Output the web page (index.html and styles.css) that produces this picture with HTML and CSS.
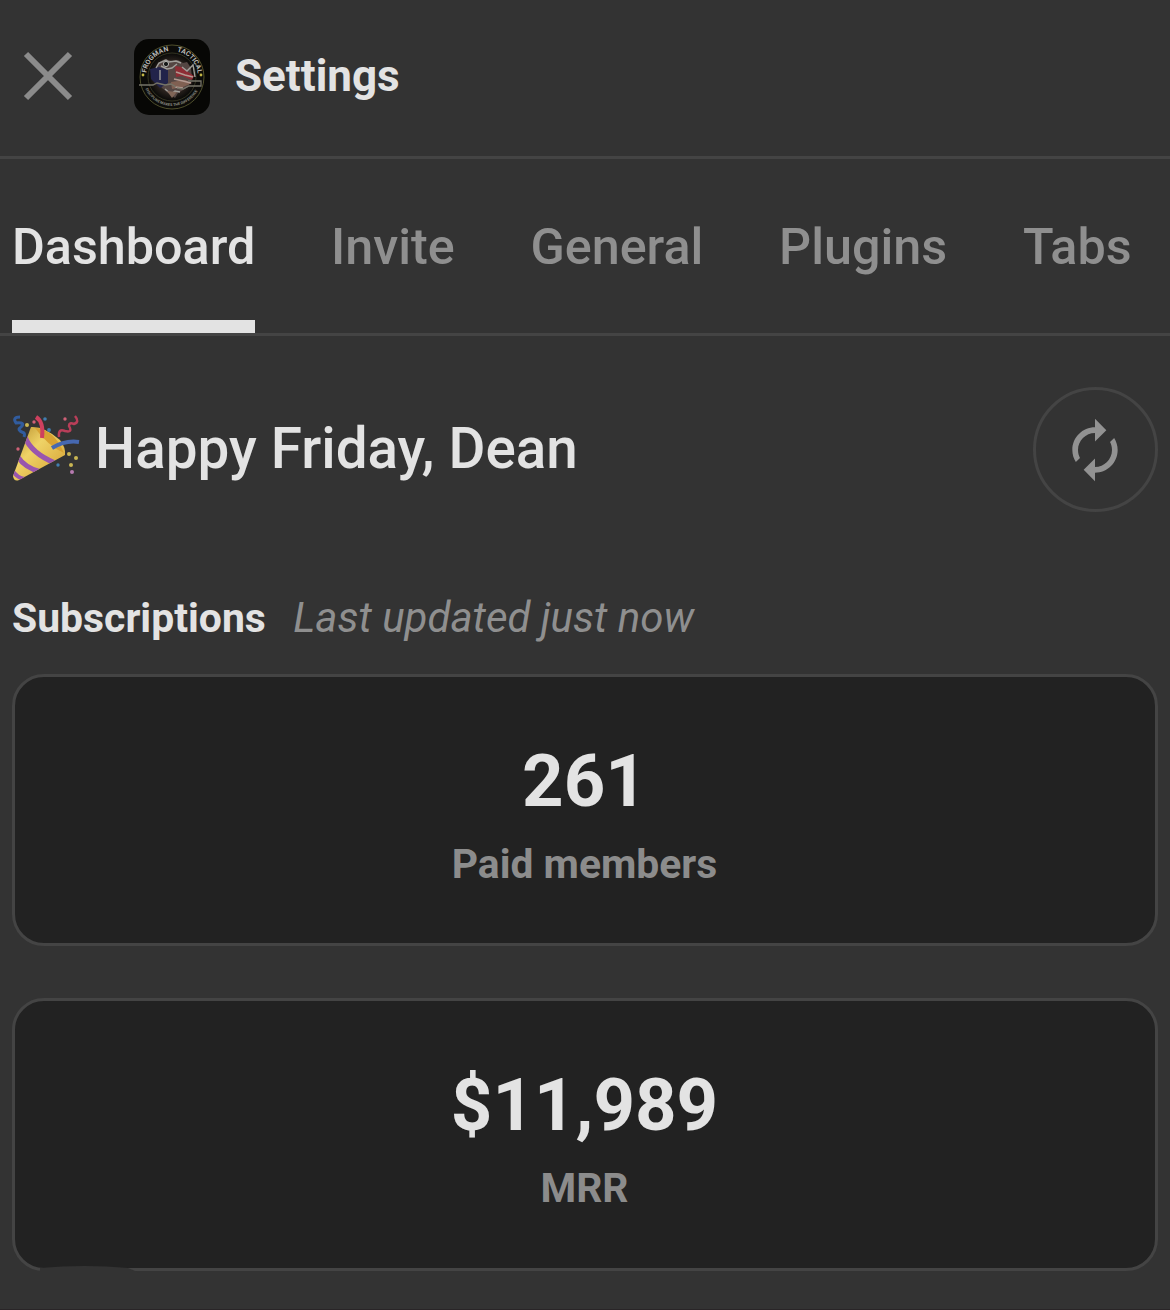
FILE: index.html
```html
<!DOCTYPE html>
<html lang="en">
<head>
  <meta charset="UTF-8">
  <meta name="viewport" content="width=device-width, initial-scale=1.0">
  <title>Settings</title>
  <link rel="stylesheet" href="styles.css">
</head>
<body>
  <header class="top-bar">
    <button class="close-btn" aria-label="Close">
      <svg width="50" height="50" viewBox="0 0 50 50"><path d="M3 3L47 47M47 3L3 47" stroke="#8b8b8b" stroke-width="6" fill="none"/></svg>
    </button>
    <svg class="logo" width="76" height="76" viewBox="0 0 76 76">
      <defs>
        <path id="ring-left" d="M12 38A26 26 0 0 1 38 12"/>
        <path id="ring-right" d="M38 12A26 26 0 0 1 64 38"/>
        <path id="ring-bottom" d="M9 38A29 29 0 0 0 67 38"/>
        <radialGradient id="glow"><stop offset="0" stop-color="#6d5a50"/><stop offset=".6" stop-color="#302722"/><stop offset="1" stop-color="#080807"/></radialGradient>
      </defs>
      <rect width="76" height="76" rx="15" fill="#070705"/>
      <circle cx="38" cy="38" r="32" fill="#0b0b09" stroke="#4f4f2c" stroke-width="1"/>
      <circle cx="38" cy="38" r="24" fill="url(#glow)" stroke="#3d3d28" stroke-width=".8"/>
      <text class="logo-text"><textPath href="#ring-left" startOffset="4">FROGMAN</textPath></text>
      <text class="logo-text"><textPath href="#ring-right" startOffset="5">TACTICAL</textPath></text>
      <text class="logo-motto"><textPath href="#ring-bottom" startOffset="12">DISCIPLINE MAKES THE DIFFERENCE</textPath></text>
      <!-- frog with flag and rifle -->
      <path d="M21 31l3-7 7-4 7 2 6-1 5 3 4-1 4 6 1 10-4 9-10 6-3 5-5-4-8-6-8-10z" fill="#544643"/>
      <path d="M16 30l9-2 9 3v13l-8 5-9-9z" fill="#22234a"/>
      <path d="M41 27l7 1 5 4 7 5-2 4-10-4-6 1z" fill="#8d2d35"/>
      <path d="M37 43l14-2 7 3-9 4-11 2z" fill="#806052"/>
      <path d="M42 33l9 3 8 2M40 40l9 2 8 2M41 48l8 1" stroke="#b39a92" stroke-width="1.6" fill="none"/>
      <path d="M22 29l3-5 7-3 3 2 7-1 5 2M27 27l6 3 5-1 5-4M26 31v10M48 28l5 4 6-6 2 12M31 50l6 5 4-3 5 1" stroke="#a09f9b" stroke-width="1.4" fill="none"/>
      <circle cx="32" cy="25" r="2.6" fill="#151717" stroke="#b5b5b0"/>
      <path d="M5 46h14l4-2 8 2 6-1 5 3M54 42h13v5h-12l-6 3-6-1" stroke="#767468" stroke-width="1.3" fill="none"/>
      <path d="M33 52l5 7 5-6" fill="#806557"/>
      <circle cx="9" cy="36" r="1.4" fill="#c1b543"/><circle cx="67" cy="36" r="1.4" fill="#c1b543"/>
    </svg>
    <h1 class="title">Settings</h1>
  </header>

  <nav class="tabs">
    <a class="tab active">Dashboard</a>
    <a class="tab">Invite</a>
    <a class="tab">General</a>
    <a class="tab">Plugins</a>
    <a class="tab">Tabs</a>
  </nav>

  <main class="content">
    <section class="greeting">
      <svg class="party" width="68" height="68" viewBox="0 0 68 68">
        <defs>
          <linearGradient id="cone" x1="0" y1="0" x2="1" y2="1"><stop offset="0" stop-color="#b58b29"/><stop offset=".4" stop-color="#efd367"/><stop offset="1" stop-color="#d29c2e"/></linearGradient>
          <clipPath id="cone-clip"><path d="M19 12Q32 11 48 25Q54 33 53 40L7 65Q2 67 1 61Z"/></clipPath>
        </defs>
        <path d="M19 12Q32 11 48 25Q54 33 53 40L7 65Q2 67 1 61Z" fill="url(#cone)"/>
        <g clip-path="url(#cone-clip)" fill="none" stroke="#9956ae" stroke-width="5">
          <path d="M13 22Q19 38 43 48"/>
          <path d="M6 42Q13 53 29 57"/>
          <path d="M0 55Q5 63 13 64" stroke-width="4"/>
        </g>
        <path d="M23 13Q42 14 52 38Q36 31 23 13" fill="#d8a232"/>
        <path d="M24 2Q32 7 30 23" fill="none" stroke="#ce405e" stroke-width="4"/>
        <path d="M40 33Q53 25 67 27" fill="none" stroke="#4668b1" stroke-width="4"/>
        <path d="M8 2Q0 2 4 8Q14 7 9 12Q4 15 12 18Q13 19 12 22" fill="none" stroke="#315c9e" stroke-width="3"/>
        <path d="M63 1Q68 7 62 9Q57 7 57 11Q61 18 53 16Q46 13 47 22" fill="none" stroke="#b93e59" stroke-width="2.5"/>
        <g fill="#cf6176"><circle cx="22" cy="7" r="1.7"/><circle cx="53" cy="4" r="1.7"/><circle cx="6" cy="34" r="1.7"/></g>
        <g fill="#417eb0"><circle cx="33" cy="4" r="1.8"/><circle cx="37" cy="15" r="1.9"/><circle cx="46" cy="50" r="1.7"/></g>
        <g fill="#c9b653"><circle cx="15" cy="10" r="2"/><circle cx="57" cy="39" r="2"/><circle cx="64" cy="43" r="2"/><circle cx="59" cy="50" r="2"/></g>
        <circle cx="60" cy="57" r="2" fill="#b77bb0"/>
      </svg>
      <h2 class="hello">Happy Friday, Dean</h2>
      <button class="refresh-btn" aria-label="Refresh">
        <svg width="68" height="68" viewBox="0 0 24 24" fill="#929292"><path d="M12 6v3l4-4-4-4v3c-4.420 0-8 3.580-8 8 0 1.570.46 3.030 1.240 4.260L6.700 14.800c-.45-.83-.7-1.790-.7-2.800 0-3.310 2.690-6 6-6zm6.760 1.740L17.300 9.200c.44.84.7 1.790.7 2.800 0 3.310-2.690 6-6 6v-3l-4 4 4 4v-3c4.420 0 8-3.580 8-8 0-1.570-.46-3.030-1.240-4.260z"/></svg>
      </button>
    </section>

    <div class="section-head">
      <h3 class="section-title">Subscriptions</h3>
      <span class="updated">Last updated just now</span>
    </div>

    <div class="cards">
      <div class="card">
        <div class="value">261</div>
        <div class="label">Paid members</div>
      </div>
      <div class="card">
        <div class="value">$11,989</div>
        <div class="label">MRR</div>
        <svg class="smudge" width="100" height="8" viewBox="0 0 100 8"><path d="M0 3Q45-1 88 3L100 8H0z" fill="#333"/></svg>
      </div>
    </div>
  </main>
</body>
</html>
```
FILE: styles.css
```css
*{
  margin: 0;
  padding: 0;
  box-sizing: border-box;
}
body{
  height: 1310px;
  overflow: hidden;
  background: #333;
  border-bottom: 1px solid #292527;
  color: #e3e3e3;
  font-family: Roboto, sans-serif;
}
button{
  background: none;
  border: none;
}
svg{
  display: block;
}
.top-bar{
  height: 159px;
  padding: 0 23px 3px;
  display: flex;
  align-items: center;
  border-bottom: 3px solid #444;
}
.close-btn{
  padding-bottom: 1px;
}
.logo{
  margin: 0 25px 0 61px;
  overflow: visible;
}
.logo-text{
  font-size: 6.9px;
  font-weight: 700;
  fill: #b9b9b5;
}
.logo-motto{
  font-size: 3.8px;
  font-weight: 700;
  fill: #8c8c82;
}
.title{
  padding-bottom: 2px;
  font-size: 44px;
  line-height: 52px;
  font-weight: 700;
}
.tabs{
  height: 177px;
  padding-left: 12px;
  display: flex;
  gap: 75.7px;
  border-bottom: 3px solid #444;
}
.tab{
  padding-top: 58px;
  font-size: 50.3px;
  line-height: 60px;
  font-weight: 500;
  color: #8f8f8f;
  border-bottom: 13px solid transparent;
}
.tab.active{
  color: #e3e3e3;
  border-color: #e3e3e3;
}
.content{
  padding: 51px 12px 0;
}
.greeting{
  display: flex;
  align-items: center;
  height: 125px;
}
.party{
  margin-bottom: 2px;
}
.hello{
  margin-left: 15px;
  padding-bottom: 2px;
  font-size: 56.6px;
  line-height: 66px;
  font-weight: 500;
}
.refresh-btn{
  width: 125px;
  height: 125px;
  margin-left: auto;
  padding-right: 2px;
  display: flex;
  align-items: center;
  justify-content: center;
  border: 3px solid #444;
  border-radius: 50%;
}
.section-head{
  margin-top: 81px;
  height: 50px;
  display: flex;
  align-items: baseline;
  gap: 27.5px;
}
.section-title{
  font-size: 40.9px;
  line-height: 50px;
  font-weight: 700;
}
.updated{
  font-size: 42px;
  line-height: 50px;
  font-style: italic;
  color: #8f8f8f;
}
.cards{
  margin-top: 31px;
  display: flex;
  flex-direction: column;
  gap: 52px;
}
.card{
  position: relative;
  height: 272px;
  padding: 62px 1px 0 0;
  background: #222;
  border: 3px solid #444;
  border-radius: 32px;
  text-align: center;
}
.card:last-child{
  height: 273px;
}
.value{
  font-size: 72.5px;
  line-height: 86px;
  font-weight: 700;
}
.label{
  margin-top: 14px;
  font-size: 40.8px;
  line-height: 50px;
  font-weight: 700;
  color: #8c8c8c;
}
.smudge{
  position: absolute;
  left: 25px;
  bottom: -5px;
}
```
